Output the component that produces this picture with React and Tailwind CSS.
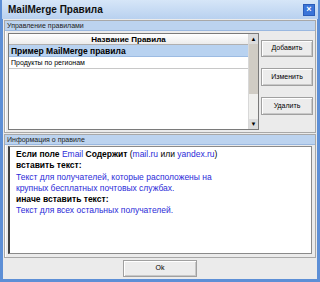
import React from 'react';

const Btn = ({ children, className = '' }) => (
  <div
    className={`flex items-center justify-center border border-[#a0a0a0] bg-[#ececec] shadow-[inset_1px_1px_0_#ffffff,inset_-1px_-1px_0_#c8c8c8] text-[7px] text-black ${className}`}
  >
    {children}
  </div>
);

const GroupHeader = ({ children }) => (
  <div className="h-[10px] bg-[#bcd3ef] border-b border-[#9ab8e0] px-[2px] text-[7px] leading-[10px] text-[#222]">
    {children}
  </div>
);

const App = () => {
  return (
    <div className="w-[320px] h-[282px] bg-[#5d8fd6] flex flex-col font-['Liberation_Sans',Arial,sans-serif] overflow-hidden">
      {/* title bar */}
      <div className="h-[19px] bg-gradient-to-b from-[#d6e6f8] to-[#b9d1ef] flex items-center justify-between pl-[6px] pr-[3px] border-x-2 border-[#5d8fd6]">
        <span className="text-[10px] font-bold text-[#101010]">MailMerge Правила</span>
        <div className="w-[12px] h-[12px] bg-[#3a74d8] border border-[#2a5cb8] flex items-center justify-center text-white text-[9px] font-bold leading-none">
          ×
        </div>
      </div>

      {/* body */}
      <div className="flex-1 mx-[3px] mb-[3px] bg-[#ebebeb] flex flex-col px-[1px] pt-[1px]">
        {/* group 1 */}
        <div className="h-[113px] border border-[#a8a8a8] shadow-[inset_1px_1px_0_#ffffff] flex flex-col">
          <GroupHeader>Управление правилами</GroupHeader>
          <div className="flex flex-1 pl-[3px] pt-[2px] pb-[2px]">
            <div className="w-[251px] border border-[#7a7a7a] bg-white flex">
              <div className="flex-1 flex flex-col">
                <div className="h-[11px] border-b border-[#b0b0b0] bg-gradient-to-b from-white to-[#ececec] text-center text-[8px] font-bold leading-[11px]">
                  Название Правила
                </div>
                <div className="h-[12px] bg-[#b8d2f0] border-b border-[#9cbbe2] text-[8.5px] font-bold leading-[12px] pl-[2px]">
                  Пример MailMerge правила
                </div>
                <div className="h-[12px] border-b border-[#c8c8c8] text-[7px] leading-[12px] pl-[2px]">
                  Продукты по регионам
                </div>
              </div>
              <div className="w-[10px] flex flex-col bg-[#ececec] border-l border-[#d8d8d8]">
                <div className="h-[10px] bg-[#dcdcdc] flex items-center justify-center text-[6px] leading-none">▲</div>
                <div className="h-[50px] bg-[#d0ccc4]" />
                <div className="flex-1 bg-[#f0f0ee]" />
                <div className="h-[10px] bg-[#dcdcdc] flex items-center justify-center text-[6px] leading-none">▼</div>
              </div>
            </div>
            <div className="flex-1 flex flex-col items-center pt-[7px] gap-[11px]">
              <Btn className="w-[52px] h-[17px]">Добавить</Btn>
              <Btn className="w-[52px] h-[18px]">Изменить</Btn>
              <Btn className="w-[52px] h-[18px]">Удалить</Btn>
            </div>
          </div>
        </div>

        {/* group 2 */}
        <div className="mt-[1px] h-[124px] border border-[#a8a8a8] shadow-[inset_1px_1px_0_#ffffff] flex flex-col">
          <GroupHeader>Информация о правиле</GroupHeader>
          <div className="flex-1 px-[3px] pt-[1px] pb-[3px] flex">
            <div className="flex-1 bg-white border border-[#8a8a8a] border-l-2 border-l-[#404040] pl-[6px] pt-[2px] text-[8.5px] leading-[11.3px]">
              <div className="font-bold text-black">
                Если поле <span className="font-normal text-[#2b2bd8]">Email</span> Содержит{' '}
                <span className="font-normal text-black">(</span>
                <span className="font-normal text-[#2b2bd8]">mail.ru</span>
                <span className="font-normal text-black"> или </span>
                <span className="font-normal text-[#2b2bd8]">yandex.ru</span>
                <span className="font-normal text-black">)</span>
              </div>
              <div className="font-bold text-black">вставить текст:</div>
              <div className="text-[#2b2bd8]">Текст для получателей, которые расположены на</div>
              <div className="text-[#2b2bd8]">крупных бесплатных почтовых службах.</div>
              <div className="font-bold text-black">иначе вставить текст:</div>
              <div className="text-[#2b2bd8]">Текст для всех остальных получателей.</div>
            </div>
          </div>
        </div>

        {/* footer */}
        <div className="flex-1 flex items-center justify-center">
          <Btn className="w-[74px] h-[17px]">Ok</Btn>
        </div>
      </div>
    </div>
  );
};

export default App;
